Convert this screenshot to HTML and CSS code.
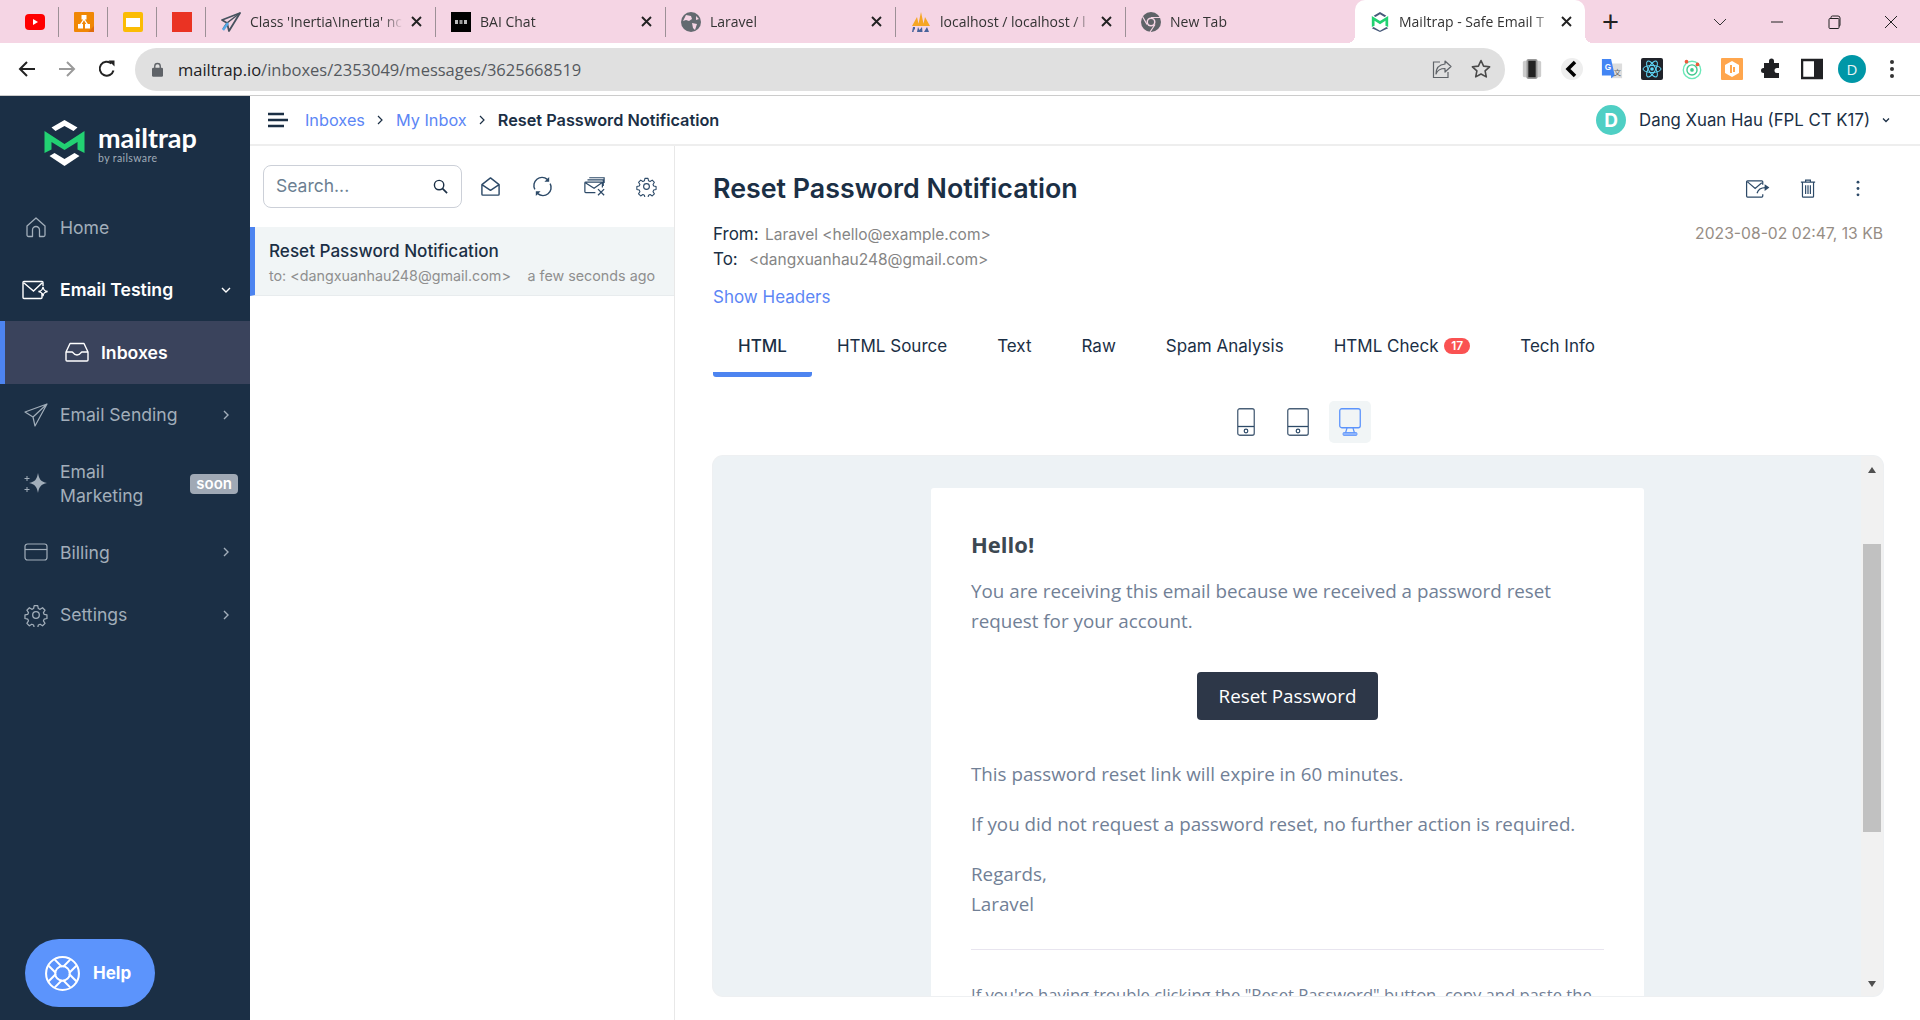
FILE: index.html
```html
<!DOCTYPE html>
<html lang="en">

<head>
    <meta charset="UTF-8">
    <title>Mailtrap - Safe Email Testing</title>
    <link rel="stylesheet" href="styles.css">
</head>

<body>
    <!-- Browser tabs -->
    <div class="tabstrip">
        <div class="tab tab-pinned">
            <svg class="favicon" viewBox="0 0 20 20"><rect y="2" width="20" height="16" rx="4" fill="#f00"/><path d="M8 7l5 3-5 3z" fill="#fff"/></svg>
        </div>
        <div class="tab tab-pinned">
            <svg class="favicon" viewBox="0 0 20 20"><rect width="20" height="20" rx="1" fill="#f08705"/><path d="M14 20l6-6v6z" fill="#df6c0c"/><path d="M7.5 3h5v4.5h-1.6l3 4.5h2.100v4.5h-5V12h1.200L10 8.200 7.800 12H9v4.500H4V12h2.100l3-4.500H7.500z" fill="#fff"/></svg>
        </div>
        <div class="tab tab-pinned">
            <svg class="favicon" viewBox="0 0 20 20"><rect width="20" height="20" rx="2" fill="#fbbc04"/><rect x="3" y="6" width="14" height="9" fill="#fff"/></svg>
        </div>
        <div class="tab tab-pinned">
            <svg class="favicon" viewBox="0 0 20 20"><rect width="20" height="20" fill="#ea3323"/></svg>
        </div>
        <div class="tab">
            <svg class="favicon" viewBox="0 0 20 20"><path d="M19 1L1 8l5 3 2 8 11-18z" fill="none" stroke="#46525e" stroke-width="1.8" stroke-linejoin="round"/><path d="M19 1L6 11l-4 6" fill="none" stroke="#46525e" stroke-width="1.5"/><path d="M7 11l-5 7" stroke="#55a9e8" stroke-width="2.5"/></svg>
            <span class="tab-title">Class 'Inertia\Inertia' nc</span>
            <svg class="tab-close" viewBox="0 0 11 11"><path d="M1 1l9 9M10 1l-9 9" stroke="#222" stroke-width="1.9"/></svg>
        </div>
        <div class="tab">
            <svg class="favicon" viewBox="0 0 20 20"><rect width="20" height="20" fill="#000"/><rect x="4" y="8" width="3" height="4" fill="#bbb"/><rect x="8.5" y="8" width="3" height="4" fill="#999"/><rect x="13" y="8" width="3" height="4" fill="#bbb"/></svg>
            <span class="tab-title">BAI Chat</span>
            <svg class="tab-close" viewBox="0 0 11 11"><path d="M1 1l9 9M10 1l-9 9" stroke="#222" stroke-width="1.9"/></svg>
        </div>
        <div class="tab">
            <svg class="favicon" viewBox="0 0 20 20"><circle cx="10" cy="10" r="10" fill="#636a70"/><path d="M5 3l5 1 1 3-3 2-3-1-3 1zM11 11l5 1-2 6-2-2zM15 4l3 3-3 1z" fill="#f5d5e4"/></svg>
            <span class="tab-title">Laravel</span>
            <svg class="tab-close" viewBox="0 0 11 11"><path d="M1 1l9 9M10 1l-9 9" stroke="#222" stroke-width="1.9"/></svg>
        </div>
        <div class="tab">
            <svg class="favicon" viewBox="0 0 20 20"><path d="M1 14L6 5l2 9zM7 14L10 0l3 14zM12 14l2-9 5 9z" fill="#f6a623"/><rect y="15" width="20" height="5" fill="#f5d5e4"/><path d="M1 20l1-5h2v2.500H3L2.500 20zM6 20l1-5 1.500 3L11 15l.5 5zM13 20l3-5 2 5z" fill="#47639b"/></svg>
            <span class="tab-title">localhost / localhost / l</span>
            <svg class="tab-close" viewBox="0 0 11 11"><path d="M1 1l9 9M10 1l-9 9" stroke="#222" stroke-width="1.9"/></svg>
        </div>
        <div class="tab tab-last">
            <svg class="favicon" viewBox="0 0 20 20"><circle cx="10" cy="10" r="10" fill="#5f6368"/><circle cx="10" cy="10" r="4.5" fill="#f5d5e4"/><circle cx="10" cy="10" r="3" fill="#5f6368"/><path d="M10 5.500h9.500M6 12.500L1.500 4.500M14 12.500L9 20" stroke="#f5d5e4" stroke-width="1.2"/></svg>
            <span class="tab-title">New Tab</span>
        </div>
        <div class="tab tab-active">
            <svg class="favicon" viewBox="0 0 40 44"><path d="M20 0l14 8-4 3-10-6-10 6-4-3zM6 33l14 8 14-8 4 3-18 8-18-8z" fill="#47597a"/><path d="M2 9l18 11L38 9v24l-6-3V19l-12 8-12-8v11l-6 3z" fill="#22d172"/></svg>
            <span class="tab-title">Mailtrap - Safe Email T</span>
            <svg class="tab-close" viewBox="0 0 11 11"><path d="M1 1l9 9M10 1l-9 9" stroke="#222" stroke-width="1.9"/></svg>
        </div>
        <span class="new-tab">+</span>
        <div class="window-buttons">
            <svg class="win-icon" viewBox="0 0 14 14"><path d="M1 4l6 6 6-6" fill="none" stroke="#333" stroke-width="1"/></svg>
            <svg class="win-icon" viewBox="0 0 14 14"><path d="M1 7h12" stroke="#222" stroke-width="1"/></svg>
            <svg class="win-icon" viewBox="0 0 14 14"><path d="M3 3.500h8a1 1 0 0 1 1 1V12.500a1 1 0 0 1-1 1H3a1 1 0 0 1-1-1V4.500a1 1 0 0 1 1-1zM4 3.500V2.500a1.500 1.500 0 0 1 1.500-1.500H11a2 2 0 0 1 2 2v7a1.500 1.500 0 0 1-1 1.400" fill="none" stroke="#222" stroke-width="1"/></svg>
            <svg class="win-icon" viewBox="0 0 14 14"><path d="M1 1l12 12M13 1L1 13" stroke="#222" stroke-width="1"/></svg>
        </div>
    </div>

    <!-- Address bar -->
    <div class="toolbar">
        <svg class="nav-icon" viewBox="0 0 18 18"><path d="M17 9H2M9 2L2 9l7 7" fill="none" stroke="#222" stroke-width="2"/></svg>
        <svg class="nav-icon" viewBox="0 0 18 18"><path d="M1 9h15M9 2l7 7-7 7" fill="none" stroke="#9a9a9a" stroke-width="2"/></svg>
        <svg class="nav-icon" viewBox="0 0 18 18"><path d="M15.500 10.500A7 7 0 1 1 13.500 3.500" fill="none" stroke="#222" stroke-width="2"/><path d="M10.500 0.500h6v6z" fill="#222"/></svg>
        <div class="omnibox">
            <svg class="lock" viewBox="0 0 12 16"><path d="M3 7V4.500a3 3 0 0 1 6 0V7" fill="none" stroke="#5f6368" stroke-width="1.5"/><rect y="6" width="12" height="10" rx="1.5" fill="#5f6368"/></svg>
            <span class="url"><b>mailtrap.io</b>/inboxes/2353049/messages/3625668519</span>
            <svg class="omni-icon" viewBox="0 0 20 20"><path d="M13 2l6 5.500-6 5.500V9.500C8 9.500 5.500 11 4 15c0-6 3.500-9.500 9-10z" fill="none" stroke="#5f6368" stroke-width="1.2" stroke-linejoin="round"/><path d="M8 3H1.500v15.500H16V13" fill="none" stroke="#5f6368" stroke-width="1.2"/></svg>
            <svg class="omni-icon" viewBox="0 0 20 20"><path d="M10 1.500l2.600 5.600 6 .7-4.500 4.100 1.200 6L10 15l-5.300 2.900 1.200-6L1.400 7.800l6-.7z" fill="none" stroke="#4a4a4a" stroke-width="1.6" stroke-linejoin="round"/></svg>
        </div>
        <div class="extensions">
            <svg class="ext" viewBox="0 0 22 24"><rect x="1" y="3" width="20" height="18" rx="2" fill="#ccc"/><rect x="5" y="1" width="12" height="22" rx="2" fill="#999"/><rect x="7" y="3" width="8" height="18" fill="#222"/></svg>
            <svg class="ext" viewBox="0 0 22 22"><circle cx="11" cy="11" r="11" fill="#eee"/><path d="M14 4l-7 7 7 7" fill="none" stroke="#000" stroke-width="3.5"/></svg>
            <svg class="ext" viewBox="0 0 22 24"><rect x="10" y="6" width="12" height="16" fill="#ddd"/><path d="M0 1h10l4 18-4 3v-3H0z" fill="#4285f4"/><text x="3" y="13" font-family="Liberation Sans" font-size="9" font-weight="700" fill="#fff">G</text><text x="13" y="18" font-family="Noto Sans CJK SC" font-size="8" fill="#666">文</text></svg>
            <svg class="ext" viewBox="0 0 22 22"><rect width="22" height="22" rx="2" fill="#20232a"/><g fill="none" stroke="#61dafb" stroke-width="1"><ellipse cx="11" cy="11" rx="9" ry="3.5"/><ellipse cx="11" cy="11" rx="9" ry="3.5" transform="rotate(60 11 11)"/><ellipse cx="11" cy="11" rx="9" ry="3.5" transform="rotate(120 11 11)"/></g><circle cx="11" cy="11" r="1.8" fill="#61dafb"/></svg>
            <svg class="ext" viewBox="0 0 22 24"><circle cx="11" cy="13" r="9.5" fill="none" stroke="#6be8b8" stroke-width="1.5"/><circle cx="11" cy="13" r="5.5" fill="none" stroke="#3fc98e" stroke-width="1.5"/><circle cx="11" cy="13" r="2" fill="#3fc98e"/><circle cx="5" cy="4" r="2" fill="#ee5a3a"/><circle cx="17" cy="7" r="2" fill="#ee5a3a"/></svg>
            <svg class="ext" viewBox="0 0 22 22"><rect width="22" height="22" rx="1" fill="#ffa64d"/><path d="M11 3l7 4v8l-7 4-7-4V7z" fill="#fff"/><path d="M9 7h2v8H9zM12 9h2v5h-2z" fill="#ffa64d"/></svg>
            <svg class="ext" viewBox="0 0 22 22"><path d="M8 3a2.500 2.500 0 0 1 5 0v2h5v5h-2a2.500 2.500 0 0 0 0 5h2v5H3v-5h-.5a2.500 2.500 0 0 1 0-5H3V5h5z" fill="#202124"/></svg>
            <svg class="ext" viewBox="0 0 22 22"><rect x="1" y="2" width="20" height="18" fill="none" stroke="#202124" stroke-width="2.5"/><rect x="13" y="2" width="8" height="18" fill="#202124"/></svg>
            <span class="profile">D</span>
            <svg class="ext" viewBox="0 0 22 22"><circle cx="11" cy="4" r="2" fill="#333"/><circle cx="11" cy="11" r="2" fill="#333"/><circle cx="11" cy="18" r="2" fill="#333"/></svg>
        </div>
    </div>

    <div class="app">
        <!-- Left navigation -->
        <aside class="sidebar">
            <div class="logo">
                <svg class="logo-mark" viewBox="0 0 40 46"><path d="M20 0l13 7.500-4 3.500-9-5-9 5-4-3.500zM5 36l15 10 15-10-5-3-10 6-10-6z" fill="#fff"/><path d="M0 11l20 13 20-13v22l-7-3.500V22l-13 8-13-8v7.500L0 33z" fill="#22d172"/></svg>
                <div class="logo-text">
                    <span class="logo-name">mailtrap</span>
                    <span class="logo-sub">by railsware</span>
                </div>
            </div>
            <nav>
                <a class="nav-item">
                    <svg class="nav-glyph" viewBox="0 0 24 24"><path d="M3 11l9-8 9 8v9a1.500 1.500 0 0 1-1.500 1.500H15.500V15a3.500 3.500 0 0 0-7 0v6.500H4.500A1.500 1.500 0 0 1 3 20z" fill="none" stroke="currentColor" stroke-width="1.3" stroke-linejoin="round"/></svg>
                    Home
                </a>
                <a class="nav-item nav-open">
                    <svg class="nav-glyph nav-glyph-wide" viewBox="0 0 28 24"><path d="M20 15v4.500a1 1 0 0 1-1 1H2a1 1 0 0 1-1-1V4.500a1 1 0 0 1 1-1h18a1 1 0 0 1 1 1V8M2 5l9.500 8L20 5" fill="none" stroke="currentColor" stroke-width="1.4"/><path d="M21 9c.6 3 1.400 3.800 4.500 4.500-3.100.7-3.900 1.500-4.500 4.500-.6-3-1.400-3.800-4.500-4.500 3.100-.7 3.900-1.500 4.500-4.500z" fill="none" stroke="currentColor" stroke-width="1.3"/></svg>
                    Email Testing
                    <svg class="caret" viewBox="0 0 10 10"><path d="M1 3l4 4 4-4" fill="none" stroke="currentColor" stroke-width="1.4"/></svg>
                </a>
                <a class="nav-item nav-sub">
                    <svg class="nav-glyph" viewBox="0 0 24 20"><path d="M1 10v8a1 1 0 0 0 1 1h20a1 1 0 0 0 1-1v-8L19 1.500H5zM1 10h6c1.500 0 1 3 5 3s3.500-3 5-3h6" fill="none" stroke="currentColor" stroke-width="1.4" stroke-linejoin="round"/></svg>
                    Inboxes
                </a>
                <a class="nav-item">
                    <svg class="nav-glyph" viewBox="0 0 24 24"><path d="M23 1L1 9l8 5 2 9zM23 1L9 14" fill="none" stroke="currentColor" stroke-width="1.2" stroke-linejoin="round"/></svg>
                    Email Sending
                    <svg class="caret" viewBox="0 0 10 10"><path d="M3 1l4 4-4 4" fill="none" stroke="currentColor" stroke-width="1.4"/></svg>
                </a>
                <a class="nav-item nav-tall">
                    <svg class="nav-glyph" viewBox="0 0 24 24"><path d="M14 1c1 6 3 9 9 10-6 1-8 4-9 10-1-6-3-9-9-10 6-1 8-4 9-10z" fill="currentColor"/><path d="M3 4v5M.5 6.500h5M3 15v5M.5 17.500h5" stroke="currentColor" stroke-width="1"/></svg>
                    <span class="nav-label">Email Marketing</span>
                    <span class="soon">soon</span>
                </a>
                <a class="nav-item">
                    <svg class="nav-glyph" viewBox="0 0 24 20"><rect x="1" y="2" width="22" height="16" rx="2.5" fill="none" stroke="currentColor" stroke-width="1.2"/><path d="M1 7.500h22" stroke="currentColor" stroke-width="1.2"/></svg>
                    Billing
                    <svg class="caret" viewBox="0 0 10 10"><path d="M3 1l4 4-4 4" fill="none" stroke="currentColor" stroke-width="1.4"/></svg>
                </a>
                <a class="nav-item">
                    <svg class="nav-glyph" viewBox="0 0 24 24"><use href="#gear"/></svg>
                    Settings
                    <svg class="caret" viewBox="0 0 10 10"><path d="M3 1l4 4-4 4" fill="none" stroke="currentColor" stroke-width="1.4"/></svg>
                </a>
            </nav>
            <a class="help">
                <svg class="help-icon" viewBox="0 0 36 36">
                    <g fill="none" stroke="#fff" stroke-width="2">
                        <circle cx="18" cy="18" r="16"/>
                        <circle cx="18" cy="18" r="7"/>
                        <path d="M10.500 4.500l10 10M4.500 10.500l10 10M25.500 4.500l-10 10M31.500 10.500l-10 10M10.500 31.500l10-10M4.500 25.500l10-10M25.500 31.500l-10-10M31.500 25.500l-10-10"/>
                    </g>
                    <circle cx="18" cy="18" r="6" fill="#5c94fc"/>
                </svg>
                Help
            </a>
        </aside>

        <div class="main">
            <div class="topbar">
                <svg class="burger" viewBox="0 0 20 16"><path d="M0 2h16M0 8h20M0 14h16" stroke="#1b2f45" stroke-width="2.5"/></svg>
                <a class="crumb">Inboxes</a>
                <svg class="crumb-sep" viewBox="0 0 10 10"><path d="M3 1l4 4-4 4" fill="none" stroke="#1b2f45" stroke-width="1.2"/></svg>
                <a class="crumb">My Inbox</a>
                <svg class="crumb-sep" viewBox="0 0 10 10"><path d="M3 1l4 4-4 4" fill="none" stroke="#1b2f45" stroke-width="1.2"/></svg>
                <span class="crumb-current">Reset Password Notification</span>
                <div class="user">
                    <span class="avatar">D</span>
                    <span class="user-name">Dang Xuan Hau (FPL CT K17)</span>
                    <svg class="user-caret" viewBox="0 0 10 10"><path d="M2 3.500l3 3 3-3" fill="none" stroke="#1b2f45" stroke-width="1.3"/></svg>
                </div>
            </div>

            <div class="panes">
                <!-- Message list -->
                <section class="list-pane">
                    <div class="list-tools">
                        <div class="search">
                            <span class="search-text">Search...</span>
                            <svg class="search-icon" viewBox="0 0 16 16"><circle cx="6.500" cy="6.500" r="5" fill="none" stroke="#1b2f45" stroke-width="1.5"/><path d="M10 10l5 5" stroke="#1b2f45" stroke-width="1.8"/></svg>
                        </div>
                        <svg class="tool" viewBox="0 0 22 22"><path d="M2 9l9-7 9 7v10a1 1 0 0 1-1 1H3a1 1 0 0 1-1-1zM2 9l9 6 9-6" fill="none" stroke="#2d4a68" stroke-width="1.5" stroke-linejoin="round"/></svg>
                        <svg class="tool" viewBox="0 0 22 22"><path d="M3 14a8.500 8.500 0 0 1 13-10.500M19 8a8.500 8.500 0 0 1-13 10.500" fill="none" stroke="#2d4a68" stroke-width="1.5"/><path d="M18 1v5h-5zM4 21v-5h5z" fill="#2d4a68"/></svg>
                        <svg class="tool" viewBox="0 0 24 22"><path d="M13 18H2a1 1 0 0 1-1-1V7a1 1 0 0 1 1-1h18a1 1 0 0 1 1 1v5M2 7l9.500 6L20 7M4 3.500h18v7M6 1h17v6" fill="none" stroke="#2d4a68" stroke-width="1.4"/><path d="M16 14l7 7M23 14l-7 7" stroke="#2d4a68" stroke-width="1.5"/></svg>
                        <svg class="tool" viewBox="0 0 24 24"><use href="#gear"/></svg>
                    </div>
                    <div class="msg-row">
                        <div class="msg-title">Reset Password Notification</div>
                        <div class="msg-sub">
                            <span>to: &lt;dangxuanhau248@gmail.com&gt;</span>
                            <span>a few seconds ago</span>
                        </div>
                    </div>
                </section>

                <!-- Message detail -->
                <section class="detail">
                    <div class="title-row">
                        <h1>Reset Password Notification</h1>
                        <div class="msg-actions">
                            <svg class="action" viewBox="0 0 26 20"><path d="M18 16v2a1 1 0 0 1-1 1H2a1 1 0 0 1-1-1V3a1 1 0 0 1 1-1h15a1 1 0 0 1 1 1v3M2 3l8 7 7-6" fill="none" stroke="#2d4a68" stroke-width="1.3"/><path d="M12 15c1-4 4-6 9-6" fill="none" stroke="#2d4a68" stroke-width="1.3"/><path d="M20 5.500l5 3.500-5 3.500z" fill="#2d4a68"/></svg>
                            <svg class="action" viewBox="0 0 20 24"><path d="M1 4h18M7 4V1.500h6V4M3 4v18a1 1 0 0 0 1 1h12a1 1 0 0 0 1-1V4M7 8v11M10 8v11M13 8v11" fill="none" stroke="#2d4a68" stroke-width="1.5"/></svg>
                            <svg class="action" viewBox="0 0 20 24"><circle cx="10" cy="4" r="1.8" fill="#2d4a68"/><circle cx="10" cy="12" r="1.8" fill="#2d4a68"/><circle cx="10" cy="20" r="1.8" fill="#2d4a68"/></svg>
                        </div>
                    </div>
                    <div class="meta">
                        <div>
                            <div class="meta-line"><span class="meta-key">From:</span> Laravel &lt;hello@example.com&gt;</div>
                            <div class="meta-line"><span class="meta-key meta-to">To:</span> &lt;dangxuanhau248@gmail.com&gt;</div>
                        </div>
                        <div class="meta-date">2023-08-02 02:47, 13 KB</div>
                    </div>
                    <a class="show-headers">Show Headers</a>

                    <div class="tabs">
                        <a class="view-tab view-tab-active">HTML</a>
                        <a class="view-tab">HTML Source</a>
                        <a class="view-tab">Text</a>
                        <a class="view-tab">Raw</a>
                        <a class="view-tab">Spam Analysis</a>
                        <a class="view-tab">HTML Check <span class="count">17</span></a>
                        <a class="view-tab">Tech Info</a>
                    </div>

                    <div class="devices">
                        <div class="device">
                            <svg class="device-phone" viewBox="0 0 18 28"><rect x=".75" y=".75" width="16.5" height="26.5" rx="2" fill="none" stroke="#4a6078" stroke-width="1.3"/><path d="M1 18.500h16" stroke="#2d4a68" stroke-width="1.3"/><circle cx="9" cy="23" r="1.8" fill="none" stroke="#2d4a68" stroke-width="1.2"/></svg>
                        </div>
                        <div class="device">
                            <svg class="device-tablet" viewBox="0 0 22 28"><rect x=".75" y=".75" width="20.5" height="26.5" rx="2" fill="none" stroke="#4a6078" stroke-width="1.3"/><path d="M1 18.500h20" stroke="#2d4a68" stroke-width="1.3"/><circle cx="11" cy="23" r="1.8" fill="none" stroke="#2d4a68" stroke-width="1.2"/></svg>
                        </div>
                        <div class="device device-on">
                            <svg class="device-desk" viewBox="0 0 22 28"><rect x=".75" y=".75" width="20.5" height="19" rx="2" fill="none" stroke="#5c94fc" stroke-width="1.3"/><path d="M8 20l-1.500 5h9L14 20" fill="none" stroke="#5c94fc" stroke-width="1.2"/><rect x="4" y="24.500" width="14" height="3" rx="1" fill="#8eb4fb" stroke="#5c94fc" stroke-width=".8"/></svg>
                        </div>
                    </div>

                    <!-- Email preview -->
                    <div class="preview">
                        <div class="preview-body">
                            <div class="mail">
                                <h2>Hello!</h2>
                                <p>You are receiving this email because we received a password reset request for your account.</p>
                                <div class="mail-action"><a class="mail-btn">Reset Password</a></div>
                                <p>This password reset link will expire in 60 minutes.</p>
                                <p>If you did not request a password reset, no further action is required.</p>
                                <p>Regards,<br>Laravel</p>
                                <div class="mail-sub">
                                    <p>If you're having trouble clicking the "Reset Password" button, copy and paste the URL below into your web browser:</p>
                                </div>
                            </div>
                        </div>
                        <div class="scrollbar">
                            <span class="arrow-up"></span>
                            <span class="thumb"></span>
                            <span class="arrow-down"></span>
                        </div>
                    </div>
                </section>
            </div>
        </div>
    </div>

    <!-- Shared gear icon -->
    <svg class="defs" width="0" height="0">
        <symbol id="gear" viewBox="0 0 24 24">
            <path d="M10 1.500h4l.7 3.200 2 .9 2.800-1.800 2.800 2.800-1.800 2.800.9 2 3.100.6v4l-3.100.7-.9 2 1.800 2.800-2.800 2.800-2.800-1.800-2 .9-.7 3.100h-4l-.7-3.100-2-.9-2.800 1.800-2.800-2.800 1.800-2.800-.9-2-3.100-.7v-4l3.100-.6.9-2-1.800-2.800 2.800-2.800 2.800 1.800 2-.9z" transform="translate(1.400 1.400) scale(.88)" fill="none" stroke="currentColor" stroke-width="1.4" stroke-linejoin="round"/>
            <circle cx="12" cy="12" r="3.300" fill="none" stroke="currentColor" stroke-width="1.3"/>
        </symbol>
    </svg>
</body>

</html>
```

FILE: styles.css
```css
* {
    box-sizing: border-box;
}

html,
body {
    margin: 0;
    padding: 0;
    height: 100%;
    overflow: hidden;
}

body {
    display: flex;
    flex-direction: column;
    height: 1020px;
    font-family: 'Inter', sans-serif;
    color: #1b2f45;
    background-color: #fff;
}

.defs {
    display: none;
}

/* Browser chrome */
.tabstrip {
    display: flex;
    align-items: center;
    flex: 0 0 43px;
    padding-left: 10px;
    background-color: #f5d5e4;
    font-family: 'Open Sans', sans-serif;
    font-size: 14px;
    color: #333;
}

.tab {
    display: flex;
    align-items: center;
    width: 230px;
    height: 30px;
    padding: 0 13px 0 15px;
    border-right: 1px solid #9c9096;
}

.tab-pinned {
    width: 49px;
    padding: 0 14px 0 15px;
}

.tab-last {
    width: 229px;
    border-right: 0;
}

.tab-active {
    position: relative;
    height: 43px;
    border-right: 0;
    background-color: #fff;
    border-radius: 10px 10px 0 0;
}

.tab-active::before,
.tab-active::after {
    content: "";
    position: absolute;
    bottom: 0;
    width: 8px;
    height: 8px;
}

.tab-active::before {
    left: -8px;
    background: radial-gradient(circle at 0 0, transparent 8px, #fff 8px);
}

.tab-active::after {
    right: -8px;
    background: radial-gradient(circle at 100% 0, transparent 8px, #fff 8px);
}

.favicon {
    flex: 0 0 20px;
    width: 20px;
    height: 20px;
}

.tab-title {
    flex: 1;
    margin-left: 9px;
    overflow: hidden;
    white-space: nowrap;
    -webkit-mask-image: linear-gradient(to left, transparent 0, #000 20px);
    mask-image: linear-gradient(to left, transparent 0, #000 20px);
}

.tab-close {
    flex: 0 0 11px;
    width: 11px;
    height: 11px;
    margin-left: 8px;
}

.new-tab {
    margin-left: 17px;
    font-family: 'Liberation Sans', sans-serif;
    font-size: 29px;
    line-height: 30px;
    color: #222;
}

.window-buttons {
    display: flex;
    align-items: center;
    gap: 43px;
    margin-left: auto;
    padding-right: 22px;
}

.win-icon {
    width: 14px;
    height: 14px;
}

.toolbar {
    display: flex;
    align-items: center;
    flex: 0 0 53px;
    padding-left: 18px;
    border-bottom: 1px solid #ccc;
}

.nav-icon {
    width: 18px;
    height: 18px;
    margin-right: 22px;
}

.omnibox {
    display: flex;
    align-items: center;
    width: 1370px;
    height: 43px;
    margin-left: -3px;
    padding: 0 14px 0 17px;
    background-color: #e0e0e0;
    border-radius: 22px;
}

.lock {
    width: 11px;
    height: 15px;
}

.url {
    flex: 1;
    margin-left: 15px;
    font-family: 'Open Sans', sans-serif;
    font-size: 16.5px;
    color: #55595e;
}

.url b {
    font-weight: 400;
    color: #202124;
}

.omni-icon {
    width: 20px;
    height: 20px;
    margin-left: 19px;
}

.extensions {
    display: flex;
    align-items: center;
    gap: 18px;
    margin-left: 16px;
}

.ext {
    width: 22px;
    height: 22px;
}

.profile {
    display: flex;
    align-items: center;
    justify-content: center;
    width: 28px;
    height: 28px;
    margin: 0 -3px;
    border-radius: 50%;
    background-color: #0097a7;
    color: #e8f4f5;
    font-family: 'Open Sans', sans-serif;
    font-size: 15px;
}

/* App */
.app {
    display: flex;
    flex: 1;
    min-height: 0;
}

.sidebar {
    display: flex;
    flex-direction: column;
    flex: 0 0 250px;
    background-color: #1b2f45;
}

.logo {
    display: flex;
    align-items: center;
    height: 100px;
    padding: 0 0 6px 44px;
}

.logo-mark {
    width: 41px;
    height: 46px;
}

.logo-text {
    display: flex;
    flex-direction: column;
    margin-left: 13px;
    color: #fff;
}

.logo-name {
    font-family: 'Lato', sans-serif;
    font-size: 27px;
    font-weight: 700;
    line-height: 30px;
}

.logo-sub {
    font-family: 'Lato', sans-serif;
    font-size: 10.5px;
    line-height: 10px;
    letter-spacing: .4px;
    color: #a0acb8;
}

.nav-item {
    display: flex;
    align-items: center;
    height: 62.5px;
    padding: 0 19px 0 24px;
    font-size: 17.6px;
    color: #a2aeba;
}

.nav-glyph {
    flex: 0 0 24px;
    width: 24px;
    height: 24px;
    margin-right: 12px;
}

.nav-glyph-wide {
    flex: 0 0 28px;
    width: 28px;
    margin-left: -2px;
    margin-right: 10px;
}

.caret {
    width: 10px;
    height: 10px;
    margin-left: auto;
}

.nav-open {
    font-weight: 600;
    color: #fff;
}

.nav-sub {
    padding-left: 60px;
    border-left: 5px solid #4d84f0;
    background-color: #3a435c;
    font-weight: 600;
    color: #fff;
}

.nav-tall {
    height: 75px;
    padding-right: 12px;
}

.nav-label {
    width: 90px;
    line-height: 24px;
}

.soon {
    margin-left: auto;
    padding: 0 6px;
    border-radius: 4px;
    background-color: #a0a9b5;
    color: #fff;
    font-size: 15px;
    font-weight: 600;
    line-height: 20px;
}

.help {
    display: flex;
    align-items: center;
    width: 130px;
    height: 68px;
    margin: auto 0 13px 25px;
    padding-left: 19px;
    border-radius: 34px;
    background-color: #5c94fc;
    color: #fff;
    font-size: 17px;
    font-weight: 700;
}

.help-icon {
    width: 37px;
    height: 37px;
    margin-right: 12px;
}

.main {
    display: flex;
    flex-direction: column;
    flex: 1;
    min-width: 0;
}

.topbar {
    display: flex;
    align-items: center;
    flex: 0 0 50px;
    padding: 0 29px 0 18px;
    border-bottom: 2px solid #eee;
    font-size: 16.3px;
}

.burger {
    width: 20px;
    height: 16px;
    margin-right: 17px;
}

.crumb {
    color: #5c86f5;
}

.crumb-sep {
    width: 10px;
    height: 10px;
    margin: 0 10.5px;
}

.crumb-current {
    font-weight: 600;
}

.user {
    display: flex;
    align-items: center;
    margin-left: auto;
}

.avatar {
    display: flex;
    align-items: center;
    justify-content: center;
    width: 30px;
    height: 30px;
    border-radius: 50%;
    background-color: #4fcfc4;
    color: #fff;
    font-size: 19px;
    font-weight: 700;
}

.user-name {
    margin-left: 13px;
    font-size: 16.8px;
}

.user-caret {
    width: 10px;
    height: 10px;
    margin-left: 11px;
}

.panes {
    display: flex;
    flex: 1;
    min-height: 0;
}

.list-pane {
    flex: 0 0 425px;
    border-right: 1px solid #e8e8e8;
}

.list-tools {
    display: flex;
    align-items: center;
    height: 81px;
    padding: 0 0 0 13px;
}

.search {
    display: flex;
    align-items: center;
    justify-content: space-between;
    width: 199px;
    height: 43px;
    padding: 0 13px 0 12px;
    border: 1px solid #ccd0d8;
    border-radius: 8px;
}

.search-text {
    padding-bottom: 2px;
    font-size: 17.5px;
    color: #6c7f92;
}

.search-icon {
    width: 15px;
    height: 15px;
}

.tool {
    width: 21px;
    height: 21px;
    margin-left: 18px;
    margin-right: 13px;
    color: #2d4a68;
}

.msg-row {
    height: 69px;
    padding: 12px 19px 0 14px;
    border-left: 5px solid #4d84f0;
    border-bottom: 1px solid #e8ecee;
    background-color: #f1f5f6;
}

.msg-title {
    font-size: 17.1px;
    font-weight: 500;
    line-height: 24px;
}

.msg-sub {
    display: flex;
    justify-content: space-between;
    margin-top: 2px;
    font-size: 14.3px;
    line-height: 22px;
    color: #8f8f8f;
}

.detail {
    flex: 1;
    min-width: 0;
    padding: 0 37px 0 38px;
}

.title-row {
    display: flex;
    align-items: center;
    justify-content: space-between;
    margin-top: 24px;
}

h1 {
    margin: 0;
    font-size: 26.8px;
    font-weight: 600;
    line-height: 36px;
}

.msg-actions {
    display: flex;
    align-items: center;
    gap: 24px;
    margin-right: 12px;
}

.action {
    width: 26px;
    height: 19px;
}

.meta {
    display: flex;
    justify-content: space-between;
    margin-top: 16px;
}

.meta-line {
    font-size: 15.5px;
    line-height: 24px;
    color: #858585;
}

.meta-key {
    margin-right: 2px;
    font-size: 17px;
    color: #1b2f45;
}

.meta-to {
    margin-right: 7px;
}

.meta-date {
    font-size: 15.7px;
    line-height: 24px;
    color: #968d85;
}

.show-headers {
    display: block;
    margin-top: 13px;
    font-size: 17px;
    line-height: 24px;
    color: #5c86f5;
}

.tabs {
    display: flex;
    margin-top: 13px;
}

.view-tab {
    height: 55px;
    padding: 12px 25px 0;
    font-size: 17px;
    line-height: 24px;
    color: #1b2f45;
}

.view-tab-active {
    border-bottom: 5px solid #4d84f0;
    border-radius: 0 0 3px 3px;
    font-weight: 500;
}

.count {
    display: inline-block;
    margin-left: 1px;
    padding: 0 7px;
    border-radius: 8px;
    background-color: #fa5252;
    color: #fff;
    font-size: 12px;
    font-weight: 600;
    line-height: 16px;
    vertical-align: 2px;
}

.devices {
    display: flex;
    justify-content: center;
    gap: 10px;
    margin-top: 24px;
}

.device {
    display: flex;
    align-items: center;
    justify-content: center;
    width: 42px;
    height: 42px;
    border-radius: 5px;
}

.device-on {
    background-color: #f1f5f6;
}

.device-phone {
    width: 18px;
    height: 28px;
}

.device-tablet,
.device-desk {
    width: 22px;
    height: 28px;
}

.preview {
    display: flex;
    height: 540px;
    margin-top: 13px;
    border-radius: 10px;
    background-color: #edf2f5;
    box-shadow: 0 0 0 1px #eef0f2;
    overflow: hidden;
}

.preview-body {
    flex: 1;
    min-width: 0;
    padding-top: 32px;
    overflow: hidden;
}

.mail {
    width: 713px;
    margin: 0 0 0 218px;
    padding: 41px 40px 0;
    background-color: #fff;
    border-radius: 3px;
    font-family: 'Open Sans', sans-serif;
    font-size: 18.8px;
    color: #718096;
}

.mail h2 {
    margin: 0 0 17px;
    font-size: 22px;
    font-weight: 700;
    line-height: 30px;
    color: #3d4852;
}

.mail p {
    margin: 0 0 20px;
    line-height: 30px;
}

.mail-action {
    display: flex;
    justify-content: center;
    margin: 36px 0 39px;
}

.mail-btn {
    padding: 9px 22px;
    border-radius: 4px;
    background-color: #2d3748;
    color: #fff;
    line-height: 30px;
}

.mail-sub {
    margin-top: 30px;
    padding-top: 32px;
    border-top: 1px solid #e8e5ef;
}

.mail-sub p {
    font-size: 16.6px;
    line-height: 25px;
}

.scrollbar {
    display: flex;
    flex-direction: column;
    align-items: center;
    flex: 0 0 22px;
    padding-top: 11px;
    background-color: #f1f1f1;
}

.arrow-up {
    border: 4px solid transparent;
    border-top: 0;
    border-bottom: 6px solid #505050;
}

.thumb {
    width: 18px;
    height: 288px;
    margin-top: 71px;
    background-color: #c1c1c1;
}

.arrow-down {
    margin-top: auto;
    margin-bottom: 9px;
    border: 4px solid transparent;
    border-bottom: 0;
    border-top: 6px solid #505050;
}
```
